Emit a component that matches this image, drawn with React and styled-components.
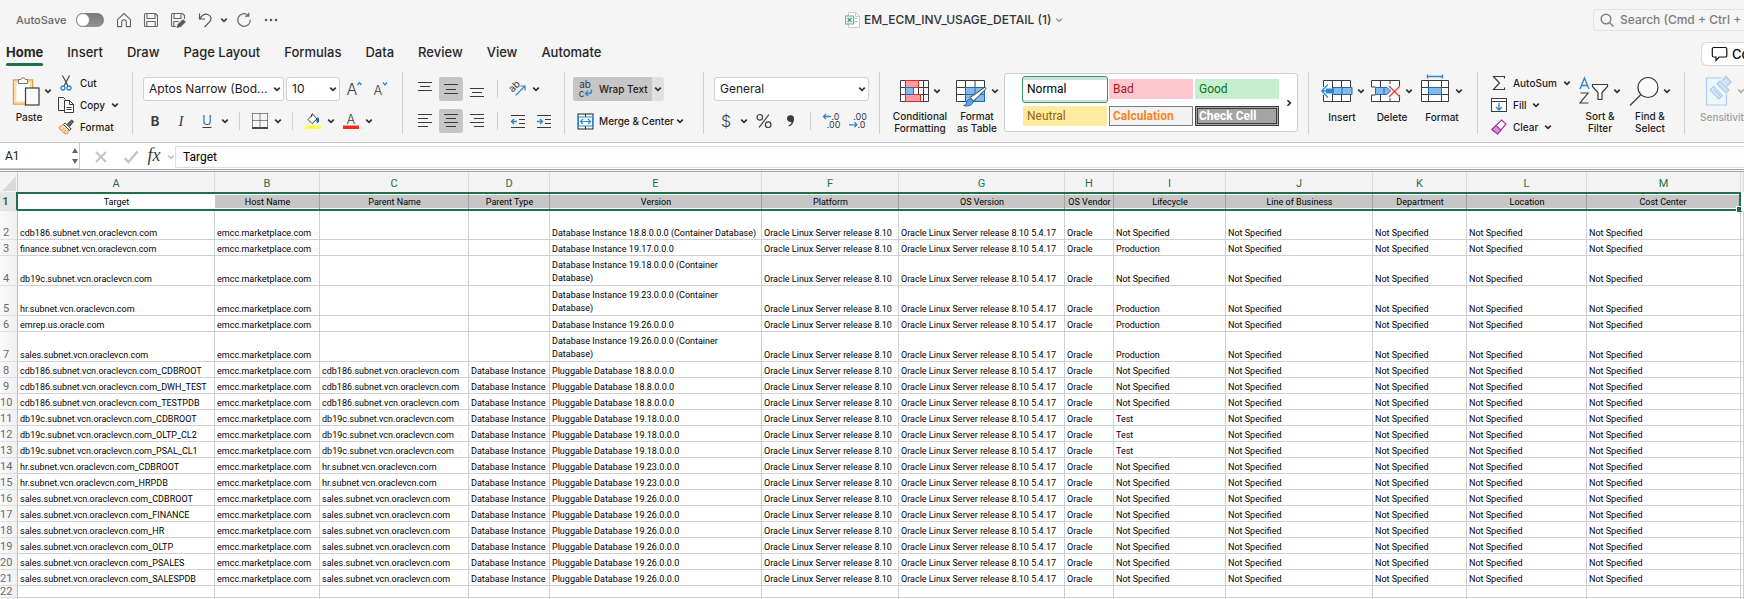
import React from 'react';
import styled, { createGlobalStyle, css } from 'styled-components';

const ui = 'Inter, "Liberation Sans", sans-serif';
const sheetFont = 'Roboto, "Liberation Sans", sans-serif';
const green = '#1e7048';

const GlobalStyle = createGlobalStyle`
  *, *::before, *::after { box-sizing: border-box; }
  body { margin: 0; background: #fff; }
  button, input, select { font: inherit; color: inherit; margin: 0; }
  button { padding: 0; border: 0; background: none; white-space: nowrap; }
  svg { display: block; flex: none; overflow: visible; }
`;

const Window = styled.div`
  height: 100vh;
  display: flex;
  flex-direction: column;
  overflow: hidden;
  background: #f5f5f5;
  color: #262626;
  font: 12px/16px ${ui};
`;

/* ---------- title bar ---------- */
const TitleBar = styled.header`
  display: grid;
  grid-template-columns: 845fr 228px 671fr;
  align-items: center;
  height: 40px;
  flex: none;
`;
const QuickAccess = styled.div`
  display: flex;
  align-items: center;
  padding-left: 16px;
  color: #555;
`;
const SwitchLabel = styled.label`
  display: flex;
  align-items: center;
  gap: 10px;
  margin-right: 6px;
  font-size: 11px;
  font-weight: 500;
  color: #666;
`;
const Switch = styled.input`
  appearance: none;
  width: 28px;
  height: 14px;
  border-radius: 7px;
  background: linear-gradient(#7a7a7a, #929292);
  &::before {
    content: '';
    display: block;
    width: 14px;
    height: 14px;
    border-radius: 50%;
    background: #fff;
    border: 1px solid #8c8c8c;
  }
`;
const QuickButton = styled.button`
  display: grid;
  place-items: center;
  width: ${(p) => (p.$narrow ? 12 : 27)}px;
  height: 24px;
`;
const DocTitle = styled.button`
  display: flex;
  align-items: center;
  gap: 4px;
  font-size: 12px;
  font-weight: 500;
  color: #333;
`;
const Search = styled.label`
  justify-self: end;
  display: flex;
  align-items: center;
  gap: 6px;
  width: 151px;
  height: 22px;
  padding-left: 6px;
  overflow: hidden;
  border: 1px solid #e2e2e2;
  border-right: 0;
  border-radius: 5px 0 0 5px;
  color: #777;
  input {
    flex: none;
    width: 150px;
    padding: 0;
    border: 0;
    background: none;
    font-weight: 500;
  }
  input::placeholder { color: #7c7c7c; opacity: 1; }
`;

/* ---------- tabs ---------- */
const TabBar = styled.nav`
  display: flex;
  justify-content: space-between;
  height: 30px;
  flex: none;
`;
const Tabs = styled.div`
  display: flex;
  gap: 24px;
  padding-left: 6px;
`;
const Tab = styled.button`
  display: flex;
  flex-direction: column;
  justify-content: space-between;
  height: 26px;
  padding-top: 4px;
  font-size: 13px;
  line-height: 16px;
  font-weight: ${(p) => (p.$active ? 700 : 500)};
  &::after {
    content: '';
    width: 100%;
    height: 3px;
    border-radius: 2px;
    background: ${(p) => (p.$active ? green : 'transparent')};
  }
`;
const Comments = styled.button`
  display: flex;
  align-items: center;
  gap: 4px;
  width: 43px;
  height: 24px;
  margin-top: 2px;
  padding-left: 9px;
  overflow: hidden;
  border: 1px solid #d8d8d8;
  border-right: 0;
  border-radius: 6px 0 0 6px;
  background: #fff;
  color: #000;
  font-size: 13px;
  font-weight: 500;
`;

/* ---------- ribbon ---------- */
const Ribbon = styled.div`
  display: flex;
  flex: none;
  height: 73px;
  padding-top: 2px;
  border-bottom: 1px solid #c9c9c9;
`;
const Group = styled.section`
  display: flex;
  flex: none;
  height: 62px;
  width: ${(p) => p.$w}px;
  padding-left: ${(p) => p.$pad}px;
  border-right: 1px solid #d0d0d0;
  &:last-child { flex: 1 1 0; border: 0; overflow: hidden; }
`;
const Rows = styled.div`
  display: flex;
  flex-direction: column;
  gap: 8px;
  padding-top: 5px;
`;
const Row = styled.div`
  display: flex;
  align-items: center;
  gap: 2px;
  height: 24px;
`;
const Split = styled.div`
  display: flex;
`;
const Tool = styled.button`
  display: grid;
  place-items: center;
  width: 24px;
  height: 24px;
  border-radius: 3px;
  background: ${(p) => (p.$on ? '#c6c6c6' : 'none')};
`;
const Arrow = styled.button`
  display: grid;
  place-items: center;
  width: 12px;
  height: 24px;
`;
const Rule = styled.span`
  width: 1px;
  height: 18px;
  margin: 0 6px;
  background: #d0d0d0;
`;
const SelectBox = styled.label`
  position: relative;
  width: ${(p) => p.$w}px;
  height: 24px;
  select {
    appearance: none;
    width: 100%;
    height: 24px;
    padding: 0 12px 0 5px;
    border: 1px solid #cfcfcf;
    border-radius: 3px;
    background: #fff;
    color: #1c1c1c;
    font-size: 12px;
  }
  svg {
    position: absolute;
    right: 3px;
    top: 8px;
    pointer-events: none;
  }
`;
const List = styled.div`
  display: flex;
  flex-direction: column;
  align-items: flex-start;
  width: ${(p) => p.$w}px;
`;
const ListItem = styled.button`
  display: flex;
  align-items: center;
  flex: none;
  gap: 6px;
  height: 22px;
  font-size: 10px;
  font-weight: 500;
  color: #1c1c1c;
`;
const Big = styled.button`
  display: flex;
  flex-direction: column;
  align-items: ${(p) => (p.$start ? 'flex-start' : 'center')};
  width: ${(p) => p.$w}px;
  flex: none;
  color: ${(p) => (p.disabled ? '#a0a0a0' : '#1c1c1c')};
`;
const BigIcon = styled.span`
  display: flex;
  align-items: center;
  gap: 4px;
  height: 38px;
`;
const BigLabel = styled.span`
  min-width: 34px;
  padding-top: 1px;
  text-align: center;
  font-size: 10px;
  line-height: 12px;
  font-weight: 500;
  white-space: pre-line;
`;
const WrapButton = styled.div`
  display: flex;
  height: 24px;
  width: 91px;
  border-radius: 3px;
  overflow: hidden;
  background: #e0e0e0;
  button:first-child { background: #c6c6c6; width: 79px; }
`;
const TextTool = styled.button`
  display: flex;
  align-items: center;
  gap: 5px;
  height: 24px;
  padding-left: 4px;
  font-size: 10px;
  font-weight: 500;
  color: #1c1c1c;
`;
const Gallery = styled.div`
  display: flex;
  align-items: center;
  justify-content: space-between;
  width: 294px;
  height: 59px;
  margin-top: 1px;
  padding: 0 2px 0 17px;
  border: 1px solid #cfcfcf;
  border-radius: 3px;
  background: #fff;
`;
const StyleGrid = styled.div`
  display: grid;
  grid-template-columns: 86px 86px 86px;
  grid-template-rows: 27px 27px;
  align-items: center;
  justify-items: center;
`;
const styles = {
  normal: css`
    width: 86px; height: 27px; color: #000; padding-left: 4px;
    border: 1px solid #3d9468; border-radius: 3px;
    box-shadow: inset 0 3px #cfe3d8, inset 0 -2px #cfe3d8;
  `,
  bad: css`background: #ffc7ce; color: #a3171b;`,
  good: css`background: #c6efce; color: #12701c;`,
  neutral: css`background: #ffeb9f; color: #9c6210;`,
  calculation: css`background: #f2f2f2; color: #fa8422; font-weight: 700; border: 1px solid #7f7f7f; padding-left: 3px;`,
  check: css`background: #a5a5a5; color: #fff; font-weight: 700; border: 3px double #3f3f3f; padding-left: 1px;`,
};
const StyleCell = styled.button`
  width: 84px;
  height: 20px;
  padding-left: 4px;
  text-align: left;
  font: 12px/14px ${sheetFont};
  ${(p) => styles[p.$kind]}
`;

/* ---------- formula bar ---------- */
const FormulaBar = styled.div`
  display: flex;
  align-items: center;
  flex: none;
  height: 29px;
  background: #fff;
  border-bottom: 1px solid #a8a8a8;
  box-shadow: inset 0 -1px #f0f0f0, inset 0 -2px #a8a8a8;
`;
const NameBox = styled.label`
  display: flex;
  align-items: center;
  width: 80px;
  height: 26px;
  align-self: flex-start;
  padding: 0 1px 0 5px;
  border: solid #c9c9c9;
  border-width: 0 1px 1px 0;
  input { width: 66px; padding: 0; border: 0; background: none; font: 12px/16px ${sheetFont}; color: #222; }
`;
const FormulaTools = styled.div`
  display: flex;
  align-items: center;
  width: 95px;
  height: 24px;
`;
const FormulaTool = styled.button`
  display: grid;
  place-items: center;
  width: ${(p) => p.$w}px;
  height: 24px;
`;
const FormulaInput = styled.input`
  flex: 1;
  min-width: 0;
  height: 22px;
  padding: 0 7px;
  border: 1px solid #e0e0e0;
  border-right: 0;
  background: #fdfdfd;
  color: #000;
  font: 12px/16px ${sheetFont};
`;

/* ---------- sheet ---------- */
const Sheet = styled.main`
  flex: 1;
  min-height: 0;
  overflow: hidden;
  background: #fff;
`;
const Grid = styled.table`
  width: 100%;
  table-layout: fixed;
  border-collapse: separate;
  border-spacing: 0;
  font: 9px/12px ${sheetFont};
  color: #000;
`;
const Col = styled.col`
  width: ${(p) => (p.$w ? p.$w + 'px' : 'auto')};
`;
const Corner = styled.td`
  height: 20px;
  padding: 2px 0 0 2px;
  background: #f4f4f4;
  border-right: 1px solid #cfcfcf;
`;
const ColHead = styled.th`
  height: 20px;
  padding: 4px 0 0;
  background: #f3f3f3;
  border-right: 1px solid #dcdcdc;
  color: ${green};
  font-size: 11px;
  font-weight: 400;
  line-height: 14px;
`;
const RowHead = styled.th`
  height: ${(p) => p.$h}px;
  padding: 0 5px 0 0;
  vertical-align: bottom;
  overflow: hidden;
  background: linear-gradient(90deg, #fafafa, #f0f0f0);
  border-right: ${(p) => (p.$on ? `2px solid ${green}` : '1px solid #bdbdbd')};
  border-bottom: 1px solid #e0e0e0;
  color: ${(p) => (p.$on ? green : '#6a6a6a')};
  font-size: 11px;
  font-weight: ${(p) => (p.$on ? 700 : 400)};
  line-height: ${(p) => (p.$h < 14 ? 11 : 13)}px;
  ${(p) => p.$on && 'vertical-align: middle; padding-top: 1px; background: #e6e6e6;'}
`;
const Cell = styled.td`
  height: ${(p) => p.$h}px;
  padding: 0 0 0 2px;
  vertical-align: bottom;
  white-space: pre;
  line-height: ${(p) => (p.$wrapped ? 13 : p.$h < 14 ? 11 : 12)}px;
  border-right: 1px solid #d0d0d0;
  border-bottom: 1px solid #d0d0d0;
`;
const HeadCell = styled.td`
  position: relative;
  height: 19px;
  padding: 0;
  text-align: center;
  white-space: nowrap;
  background: ${(p) => (p.$first ? '#fff' : p.$blank ? '#fff' : '#c6c6c6')};
  border: solid ${green};
  border-width: ${(p) => (p.$blank ? '0' : p.$last ? '2px 2px 2px 0' : '2px 0 2px 0')};
  box-shadow: ${(p) => (p.$blank ? 'none' : `inset ${p.$first || p.$last ? 0 : '-1px'} 0 #a2a2a2, inset 0 1px #fff, inset 0 -1px #fff`)};
`;
const Handle = styled.span`
  position: absolute;
  right: -3px;
  bottom: -3px;
  width: 6px;
  height: 6px;
  background: ${green};
  border: solid #fff;
  border-width: 1px 0 0 1px;
`;

/* ---------- icons ---------- */
const Ink = '#3b3b3b';
const Blue = '#2b88d0';
const Chevron = ({ c = '#333', w = 1.7 }) => (
  <svg width="8" height="8" viewBox="0 0 8 8" fill="none" stroke={c} strokeWidth={w}><path d="M1.2 2.6 4 5.4 6.8 2.6" /></svg>
);
const I = ({ w = 16, h = 16, c = Ink, s = 1, children }) => (
  <svg width={w} height={h} viewBox={`0 0 ${w} ${h}`} fill="none" stroke={c} strokeWidth={s}>{children}</svg>
);
const HomeIcon = () => <I c="#666" s={1.1}><path d="M1.5 7.6 8 1.5l6.5 6.1v7h-4.2V10a2.3 2.3 0 0 0-4.600 0v4.600H1.500z" strokeLinejoin="round" /></I>;
const SaveIcon = () => <I c="#666" s={1.1}><path d="M1.500 2.500a1 1 0 0 1 1-1h10l2 2v10a1 1 0 0 1-1 1h-11a1 1 0 0 1-1-1zM4 1.500V6.500h8V1.500M3.800 14.500v-5h8.400v5" /></I>;
const SaveEditIcon = () => (
  <I c="#666" s={1.1}>
    <path d="M6.500 14.500h-4a1 1 0 0 1-1-1v-11a1 1 0 0 1 1-1h10l2 2V7M4 1.500V6.500h7V1.500M3.800 14.500v-5h5" />
    <path d="M7.500 15.200l.7-3 4.800-4.300 2.200 2.200-4.700 4.400z" fill="#555" />
  </I>
);
const UndoIcon = () => <I c="#555" s={1.2}><path d="M2.500 1.500v5.500h5.500M2.700 6.800C5 3.200 8 1.500 11 2.500c3.400 1.200 4 5 1.600 7.300L7.600 15" /></I>;
const RedoIcon = () => <I c="#666" s={1.2}><path d="M14.300 8a6.300 6.300 0 1 1-2.200-4.800M12.800.8v3.400H9" /></I>;
const DotsIcon = () => <svg width="16" height="16" viewBox="0 0 16 16" fill="#555"><circle cx="3" cy="8" r="1.300" /><circle cx="8" cy="8" r="1.300" /><circle cx="13" cy="8" r="1.300" /></svg>;
const DocIcon = () => (
  <I w={15} h={16} c="#c9c9c9">
    <path d="M3.500.5h7l4 4v11h-11z" fill="#fff" /><path d="M10.500.5v4h4" />
    <path d="M9.500 6.500h3M9.500 9.500h3" stroke="#7fd0a2" />
    <rect x=".5" y="4" width="8" height="8" fill="#eef7f1" stroke="#6cae8b" />
    <path d="M2.500 6l4 4M6.500 6l-4 4" stroke="#4c9a72" strokeWidth="1.200" />
  </I>
);
const SearchIcon = () => <I w={14} h={14} c="#808080" s={1.500}><circle cx="6" cy="6" r="4.800" /><path d="M9.500 9.500l4 4" /></I>;
const CommentIcon = () => <I w={17} h={16} c="#111" s={1.200}><path d="M2.800 1.500h11.500a1.500 1.500 0 0 1 1.500 1.500v6.500a1.500 1.500 0 0 1-1.500 1.500H8.200L5 14.500V11H2.800a1.500 1.500 0 0 1-1.500-1.500V3a1.500 1.500 0 0 1 1.500-1.500z" /></I>;

const PasteIcon = () => (
  <I w={28} h={32}>
    <rect x="1.500" y="5" width="19" height="24" fill="#fff" stroke="#e8973a" strokeWidth="1.400" />
    <rect x="3.300" y="6.800" width="15.500" height="20.500" stroke="#fbdc9a" strokeWidth="2" />
    <path d="M6.500 8.500v-4h2.200a2.400 2.400 0 0 1 4.600 0h2.200v4z" fill="#fafafa" stroke="#777" />
    <rect x="13.500" y="13" width="13.500" height="17" fill="#fafafa" stroke={Ink} strokeWidth="1.200" />
  </I>
);
const CutIcon = () => (
  <I s={1.100}>
    <path d="M4.500.5l5.500 10.500M11.500.5L6 11" />
    <circle cx="5" cy="13" r="2" stroke={Blue} strokeWidth="1.300" /><circle cx="11" cy="13" r="2" stroke={Blue} strokeWidth="1.300" />
  </I>
);
const CopyIcon = () => (
  <I>
    <path d="M6 13.500H.5V.5h5l2 2" />
    <path d="M6.500 3.500h5l4 4v8h-9z" fill="#fff" /><path d="M11.500 3.500v4h4M8.500 10.500h5M8.500 12.500h5" />
  </I>
);
const BrushIcon = () => (
  <I>
    <path d="M1 8.500l5-3.500 5.500 5.500L9 15C6 14.500 2.500 12 1 8.500z" fill="#fce0b0" stroke="#e58a34" />
    <path d="M4 11.500l2-2M6 13.300l2-2.200" stroke="#e58a34" />
    <path d="M5.500 5.500L7.200 4l6 6-1.700 1.300z" fill="#fff" /><path d="M9 5.500L13.500 1l2 1.500-4 5" fill="#666" />
  </I>
);
const Letter = ({ children, size = 14, y = 13, x = 8, ...r }) => (
  <text x={x} y={y} fontSize={size} textAnchor="middle" fill={Ink} stroke="none" fontFamily="Inter, sans-serif" fontWeight="300" {...r}>{children}</text>
);
const GrowIcon = () => <I w={18} h={18}><Letter size={16} x={7} y={15}>A</Letter><path d="M12.500 5l2-2.500 2 2.500" stroke={Blue} strokeWidth="1.300" /></I>;
const ShrinkIcon = () => <I w={18} h={18}><Letter size={13} x={7} y={15}>A</Letter><path d="M12 2.500L14 5l2-2.500" stroke={Blue} strokeWidth="1.300" /></I>;
const BoldIcon = () => <I><Letter fontWeight="700" size={13}>B</Letter></I>;
const ItalicIcon = () => <I><Letter fontStyle="italic" fontFamily="Liberation Serif, serif" size={15}>I</Letter></I>;
const UnderIcon = () => <I><Letter y={12} size={13}>U</Letter><path d="M3.500 14.500h9" /></I>;
const BorderIcon = () => (
  <I><path d="M.5.5v14M15.500.5v14M8 .5v14M.5.5h15M.5 7.500h15" stroke="#222" strokeDasharray="1 1" /><path d="M0 15h16" stroke="#111" strokeWidth="1.500" /></I>
);
const FillIcon = () => (
  <I><path d="M3 6.500L8 1.500l4 4.500-5 4.500z" fill="#fff" /><path d="M6.500 4V1.500l1.500-1" /><path d="M12 6.500c1-3 2-2 1.500 2.500l-1.500.5z" fill="#1f5fa8" stroke="#1f5fa8" /><rect x="0" y="12.500" width="16" height="3.500" fill="#ffff38" stroke="none" /></I>
);
const FontColorIcon = () => <I><Letter y={10.500} size={13}>A</Letter><rect x="0" y="12.500" width="16" height="3.500" fill="#ff2a1c" stroke="none" /></I>;
const Lines = ({ d }) => <I w={16} h={18} s={1.200}><path d={d} /></I>;
const OrientIcon = () => (
  <I><g transform="rotate(-45 6 7)"><Letter size={10} x={6} y={8} fontWeight="400">ab</Letter></g><path d="M5.500 14.500L15 5M10.500 5H15v4.500" stroke={Blue} strokeWidth="1.200" /></I>
);
const IndentIcon = ({ right }) => (
  <I w={16} h={18} s={1.200}><path d="M1 3.500h14M9 7.500h6M9 11.500h6M1 15.500h14" />
    <path d={right ? 'M1 9.500h5.500M4 7l2.500 2.500L4 12' : 'M1.500 9.500H7M4 7L1.500 9.500 4 12'} stroke={Blue} strokeWidth="1.400" /></I>
);
const WrapIcon = () => (
  <I w={17} h={17}><Letter size={10} x={8} y={7} fontWeight="400">ab</Letter><Letter size={10} x={4.500} y={16} fontWeight="400">c</Letter><path d="M14.500 8.500v1.500a2.500 2.500 0 0 1-2.500 2.500H8.500M11 10l-2.500 2.500L11 15" stroke={Blue} strokeWidth="1.400" /></I>
);
const MergeIcon = () => (
  <I w={17} h={17}><rect x="1" y="1" width="15" height="15" fill="#fff" stroke="#222" /><path d="M8.500 1v3M8.500 13v3" stroke="#222" /><rect x="1.500" y="4" width="14" height="9" fill="#fff" stroke={Blue} />
    <path d="M3.500 8.500h10M6 6L3.500 8.500 6 11M11 6l2.500 2.500L11 11" stroke={Blue} strokeWidth="1.200" /></I>
);
const DollarIcon = () => <I w={18} h={20}><Letter size={16} x={9} y={16}>$</Letter></I>;
const PercentIcon = () => <I w={18} h={20} s={1.200}><path d="M14 3.500L4 16.500" /><circle cx="4.800" cy="6.300" r="2.800" /><circle cx="13.200" cy="13.700" r="2.800" /></I>;
const CommaIcon = () => <I w={16} h={20}><path d="M5 7.500a3.300 3.300 0 1 1 7 .5c0 4-2.500 7-5.500 7.500v-1c2-.8 2.800-2 3-3.500C7 11.500 5 10 5 7.500z" fill={Ink} stroke="none" /></I>;
const DecimalIcon = ({ more }) => (
  <I w={18} h={18}>
    <Letter size={9} x={more ? 12 : 13.500} y={8} fontWeight="400">{more ? '.00' : '.0'}</Letter>
    <Letter size={9} x={more ? 13.500 : 11.500} y={16} fontWeight="400">{more ? '.0' : '.00'}</Letter>
    <path d={more ? 'M1 12.800h8M6.500 10.300L9 12.800l-2.500 2.500' : 'M9 4.500H1.500M4 2L1.500 4.500 4 7'} stroke={Blue} strokeWidth="1.300" />
  </I>
);
const CondIcon = () => (
  <I w={29} h={24}><path d="M.5 1.500h28v21H.500zM.5 8.500h28M.5 15.500h28M5.500 1.500v21M18.500 1.500v21M23.500 1.500v21" fill="#fff" />
    <path d="M5.500 1.500h13v7h-13zM5.500 15.500h15v7h-15z" fill="#ff9c9c" stroke="#dc2c22" /><rect x="5.500" y="8.500" width="8" height="7" fill="#86baea" stroke="#1f69b8" /></I>
);
const TableFmtIcon = () => (
  <I w={31} h={24}><path d="M.5 1.500h28v21H.500zM.5 8.500h28M.5 15.500h28M9.500 1.500v21M19 1.500v21" fill="#fff" />
    <path d="M9.500 8.500h19v14h-19z" fill="#86baea" stroke="#1f69b8" /><path d="M9.500 15.500h19M19 8.500v14" stroke="#1f69b8" />
    <path d="M14 18.500L28.500 8.500c1.500-.3 1.700.8 1 1.800L17.500 22z" fill="#fff" /><path d="M7.500 26.500c3 0 2.500-5 6-6.500 3 0 4.500 2.500 3 4.500-2 2.500-6 3-9 2z" fill="#62a3e0" stroke="#1f69b8" /></I>
);
const CellsIcon = ({ kind }) => (
  <I w={kind === 'insert' ? 33 : 30} h={kind === 'format' ? 38 : 24}>
    {kind === 'insert' && (<>
      <path d="M3.500 8v-6.500h27v7M3.500 16v6.500h27v-7M12.500 1.500v21M21.500 1.500v21" fill="#fff" />
      <path d="M13 8.500h19v7H13z" fill="#86baea" stroke="#1f69b8" /><path d="M13.500 9.500H6v5h7.500" fill="#86baea" stroke="none" />
      <path d="M22 8.500v7" stroke="#1f69b8" /><path d="M14 12H2M8 5.500L1.800 12 8 18.500M6 10.500h8M6 13.500h8" stroke={Blue} strokeWidth="1.300" />
    </>)}
    {kind === 'delete' && (<>
      <path d="M.5 8v-6.500h28V8M.5 16v6.500h28V16M9.500 1.500V8M19 1.500V5M9.500 16v6.500M19 19v3.500M.5 8h4M.5 16h4" fill="#fff" />
      <path d="M4.500 8.500h11.500l3.500 3.500-3.500 3.500H4.500zM13 8.500v7" fill="#86baea" stroke="#1f69b8" /><path d="M18 7l11 11M29 7L18 18" stroke="#ee3d34" strokeWidth="1.300" />
    </>)}
    {kind === 'format' && (<>
      <path d="M.5 8.500h27v21H.5zM.5 15.500h27M.5 22.500h27M7.500 8.500v21M20.500 8.500v21" fill="#fff" />
      <rect x="7.500" y="15.500" width="13" height="7" fill="#86baea" stroke="#1f69b8" /><path d="M6.500 4.500h15M6.500 2.500v4M21.500 2.500v4" stroke={Blue} strokeWidth="1.300" />
    </>)}
  </I>
);
const SumIcon = () => <I s={1.200}><path d="M13.500 3.500v-2h-11L8.500 8l-6 6.500h11v-2" /></I>;
const FillDownIcon = () => <I><rect x=".5" y="1.500" width="15" height="13" fill="#fff" /><path d="M.5 4.500h15" /><path d="M8 6v7M5 10l3 3 3-3" stroke={Blue} strokeWidth="1.400" /></I>;
const EraserIcon = () => <I><path d="M10.500 1l4.500 4-8.500 10L1 10.500z" fill="#fff" stroke="#a43aa8" strokeWidth="1.200" /><path d="M5 6.500L10 11l-3.500 4L1 10.500z" fill="#d993dc" stroke="#a43aa8" strokeWidth="1.200" /></I>;
const SortIcon = () => (
  <I w={30} h={30} s={1.200}><path d="M1 13L5.500 2 10 13M2.500 9.500h6" stroke={Blue} strokeWidth="1.400" /><path d="M1.500 17h7.500l-8 10h8.500" /><path d="M13.500 8.500h15v2l-5.500 6v7h-4v-7l-5.500-6z" fill="#fff" /></I>
);
const FindIcon = () => <I w={30} h={30} s={1.200}><circle cx="19" cy="11.500" r="10" fill="#fafafa" /><path d="M12 18.500L1 29.500" /></I>;
const SensIcon = () => (
  <I w={28} h={32} c="#a9cdea" s={1.200}><path d="M17 3H1.500v27h20V19" fill="#f0f7fc" /><path d="M5 15l3.500-3.500 9 9L14 24zM8.500 14.500l6.500 6.500" fill="#dcecf8" />
    <path d="M12 9l3-3 9 9-3 3zM17 6l4-4.500 5 5.500-4 4" fill="#cfe4f4" /></I>
);
const Stepper = () => <svg width="8" height="20" viewBox="0 0 8 20" fill="#666"><path d="M1 7L4 2l3 5zM1 13L4 18l3-5z" /></svg>;

/* ---------- data ---------- */
const columns = [
  ['A', 197, 'Target'], ['B', 105, 'Host Name'], ['C', 149, 'Parent Name'], ['D', 81, 'Parent Type'], ['E', 212, 'Version'],
  ['F', 137, 'Platform'], ['G', 166, 'OS Version'], ['H', 49, 'OS Vendor'], ['I', 112, 'Lifecycle'], ['J', 147, 'Line of Business'],
  ['K', 94, 'Department'], ['L', 120, 'Location'], ['M', 154, 'Cost Center'], ['', 0, ''],
];
const dom = '.subnet.vcn.oraclevcn.com';
const db = (v) => `Database Instance ${v}`;
const container = (v) => `Database Instance ${v} (Container\nDatabase)`;
const NS = 'Not Specified';
const records = [
  [29, 'cdb186' + dom, '', db('18.8.0.0.0 (Container Database)'), NS],
  [16, 'finance' + dom, '', db('19.17.0.0.0'), 'Production'],
  [30, 'db19c' + dom, '', container('19.18.0.0.0'), NS],
  [30, 'hr' + dom, '', container('19.23.0.0.0'), 'Production'],
  [16, 'emrep.us.oracle.com', '', db('19.26.0.0.0'), 'Production'],
  [30, 'sales' + dom, '', container('19.26.0.0.0'), 'Production'],
  ...[
    ['cdb186', 'CDBROOT', '18.8', NS], ['cdb186', 'DWH_TEST', '18.8', NS], ['cdb186', 'TESTPDB', '18.8', NS],
    ['db19c', 'CDBROOT', '19.18', 'Test'], ['db19c', 'OLTP_CL2', '19.18', 'Test'], ['db19c', 'PSAL_CL1', '19.18', 'Test'],
    ['hr', 'CDBROOT', '19.23', NS], ['hr', 'HRPDB', '19.23', NS],
    ['sales', 'CDBROOT', '19.26', NS], ['sales', 'FINANCE', '19.26', NS], ['sales', 'HR', '19.26', NS],
    ['sales', 'OLTP', '19.26', NS], ['sales', 'PSALES', '19.26', NS], ['sales', 'SALESPDB', '19.26', NS],
  ].map(([host, pdb, v, life]) => [16, `${host}${dom}_${pdb}`, host + dom, `Pluggable Database ${v}.0.0.0`, life]),
];
const rows = [
  ...records.map(([h, target, parent, version, life]) => [h, [
    target, 'emcc.marketplace.com', parent, parent && 'Database Instance', version,
    'Oracle Linux Server release 8.10', 'Oracle Linux Server release 8.10 5.4.17', 'Oracle', life, NS, NS, NS, NS, '',
  ]]),
  [12, Array(14).fill('')],
  [12, Array(14).fill('')],
];

const Pick = ({ label, w, value }) => (
  <SelectBox $w={w}><select aria-label={label}><option>{value}</option></select><Chevron /></SelectBox>
);
const Menu = ({ label }) => <Arrow aria-label={label}><Chevron /></Arrow>;
const BigTool = ({ icon, label, w, start, disabled }) => (
  <Big $w={w} $start={start} disabled={disabled}>
    <BigIcon>{icon}<Chevron c={disabled ? '#aaa' : '#333'} /></BigIcon>
    <BigLabel>{label}</BigLabel>
  </Big>
);

export default function App() {
  return (
    <Window>
      <GlobalStyle />
      <TitleBar>
        <QuickAccess>
          <SwitchLabel>AutoSave<Switch type="checkbox" role="switch" /></SwitchLabel>
          <QuickButton aria-label="Home"><HomeIcon /></QuickButton>
          <QuickButton aria-label="Save"><SaveIcon /></QuickButton>
          <QuickButton aria-label="Save as"><SaveEditIcon /></QuickButton>
          <QuickButton aria-label="Undo"><UndoIcon /></QuickButton>
          <QuickButton $narrow aria-label="Undo history"><Chevron c="#444" /></QuickButton>
          <QuickButton aria-label="Redo"><RedoIcon /></QuickButton>
          <QuickButton aria-label="More"><DotsIcon /></QuickButton>
        </QuickAccess>
        <DocTitle><DocIcon />EM_ECM_INV_USAGE_DETAIL (1)<Chevron c="#888" w={1.3} /></DocTitle>
        <Search><SearchIcon /><input type="search" aria-label="Search" placeholder="Search (Cmd + Ctrl + U)" /></Search>
      </TitleBar>

      <TabBar>
        <Tabs>
          {['Home', 'Insert', 'Draw', 'Page Layout', 'Formulas', 'Data', 'Review', 'View', 'Automate'].map((t, i) => (
            <Tab key={t} $active={i === 0}>{t}</Tab>
          ))}
        </Tabs>
        <Comments><CommentIcon />Comments</Comments>
      </TabBar>

      <Ribbon>
        <Group $w={133} $pad={12}>
          <BigTool icon={<PasteIcon />} label="Paste" w={46} start />
          <List $w={70}>
            <ListItem><CutIcon />Cut</ListItem>
            <ListItem><CopyIcon />Copy<Chevron /></ListItem>
            <ListItem><BrushIcon />Format</ListItem>
          </List>
        </Group>

        <Group $w={270} $pad={10}>
          <Rows>
            <Row>
              <Pick label="Font" w={141} value="Aptos Narrow (Bod..." />
              <Pick label="Font size" w={54} value="10" />
              <Tool aria-label="Increase font size"><GrowIcon /></Tool>
              <Tool aria-label="Decrease font size"><ShrinkIcon /></Tool>
            </Row>
            <Row>
              <Tool aria-label="Bold"><BoldIcon /></Tool>
              <Tool aria-label="Italic"><ItalicIcon /></Tool>
              <Split><Tool aria-label="Underline"><UnderIcon /></Tool><Menu label="Underline options" /></Split>
              <Rule />
              <Split><Tool aria-label="Borders"><BorderIcon /></Tool><Menu label="Border options" /></Split>
              <Rule />
              <Split><Tool aria-label="Fill color"><FillIcon /></Tool><Menu label="Fill options" /></Split>
              <Split><Tool aria-label="Font color"><FontColorIcon /></Tool><Menu label="Font color options" /></Split>
            </Row>
          </Rows>
        </Group>

        <Group $w={162} $pad={10}>
          <Rows>
            <Row>
              <Tool aria-label="Top align"><Lines d="M1 2.5h14M3 6.500h10M1 10.500h14" /></Tool>
              <Tool $on aria-label="Middle align"><Lines d="M1 4.500h14M3 9.500h10M1 13.500h14" /></Tool>
              <Tool aria-label="Bottom align"><Lines d="M1 8.500h14M3 12.500h10M1 16.500h14" /></Tool>
              <Rule />
              <Split><Tool aria-label="Orientation"><OrientIcon /></Tool><Menu label="Orientation options" /></Split>
            </Row>
            <Row>
              <Tool aria-label="Align left"><Lines d="M1 2.500h14M1 6.500h10M1 10.500h14M1 14.500h10" /></Tool>
              <Tool $on aria-label="Center"><Lines d="M1 2.500h14M3 6.500h10M1 10.500h14M3 14.500h10" /></Tool>
              <Tool aria-label="Align right"><Lines d="M1 2.500h14M5 6.500h10M1 10.500h14M5 14.500h10" /></Tool>
              <Rule />
              <Tool aria-label="Decrease indent"><IndentIcon /></Tool>
              <Tool aria-label="Increase indent"><IndentIcon right /></Tool>
            </Row>
          </Rows>
        </Group>

        <Group $w={139} $pad={8}>
          <Rows>
            <Row><WrapButton><TextTool><WrapIcon />Wrap Text</TextTool><Menu label="Wrap options" /></WrapButton></Row>
            <Row><Split><TextTool><MergeIcon />Merge &amp; Center</TextTool><Menu label="Merge options" /></Split></Row>
          </Rows>
        </Group>

        <Group $w={176} $pad={10}>
          <Rows>
            <Row><Pick label="Number format" w={155} value="General" /></Row>
            <Row>
              <Split><Tool aria-label="Currency"><DollarIcon /></Tool><Menu label="Currency options" /></Split>
              <Tool aria-label="Percent"><PercentIcon /></Tool>
              <Tool aria-label="Comma"><CommaIcon /></Tool>
              <Rule />
              <Tool aria-label="Increase decimal"><DecimalIcon /></Tool>
              <Tool aria-label="Decrease decimal"><DecimalIcon more /></Tool>
            </Row>
          </Rows>
        </Group>

        <Group $w={429} $pad={10}>
          <BigTool icon={<CondIcon />} label={'Conditional\nFormatting'} w={60} />
          <BigTool icon={<TableFmtIcon />} label={'Format\nas Table'} w={54} />
          <Gallery>
            <StyleGrid>
              <StyleCell $kind="normal">Normal</StyleCell>
              <StyleCell $kind="bad">Bad</StyleCell>
              <StyleCell $kind="good">Good</StyleCell>
              <StyleCell $kind="neutral">Neutral</StyleCell>
              <StyleCell $kind="calculation">Calculation</StyleCell>
              <StyleCell $kind="check">Check Cell</StyleCell>
            </StyleGrid>
            <Arrow aria-label="More styles"><I w={8} h={8} c="#222" s={1.6}><path d="M2.500 1.200L5.300 4 2.500 6.800" /></I></Arrow>
          </Gallery>
        </Group>

        <Group $w={169} $pad={8}>
          <BigTool icon={<CellsIcon kind="insert" />} label="Insert" w={50} />
          <BigTool icon={<CellsIcon kind="delete" />} label="Delete" w={50} />
          <BigTool icon={<CellsIcon kind="format" />} label="Format" w={50} />
        </Group>

        <Group $w={207} $pad={13}>
          <List $w={84}>
            <ListItem><SumIcon />AutoSum<Chevron /></ListItem>
            <ListItem><FillDownIcon />Fill<Chevron /></ListItem>
            <ListItem><EraserIcon />Clear<Chevron /></ListItem>
          </List>
          <BigTool icon={<SortIcon />} label={'Sort &\nFilter'} w={50} />
          <BigTool icon={<FindIcon />} label={'Find &\nSelect'} w={50} />
        </Group>

        <Group $pad={11}>
          <BigTool icon={<SensIcon />} label="Sensitivity" w={58} disabled />
        </Group>
      </Ribbon>

      <FormulaBar>
        <NameBox><input aria-label="Name box" defaultValue="A1" /><Stepper /></NameBox>
        <FormulaTools>
          <FormulaTool $w={42} aria-label="Cancel"><I w={14} h={14} c="#c4c4c4" s={2}><path d="M2 2l10 10M12 2L2 12" /></I></FormulaTool>
          <FormulaTool $w={18} aria-label="Enter"><I w={16} h={14} c="#c4c4c4" s={2.400}><path d="M1.500 8l4 4 9-10.500" /></I></FormulaTool>
          <FormulaTool $w={26} aria-label="Insert function"><I w={18} h={18}><Letter x={10} size={18} fontFamily="Liberation Serif, serif" fontStyle="italic">fx</Letter></I></FormulaTool>
          <FormulaTool $w={9} aria-label="Function list"><Chevron c="#c4c4c4" /></FormulaTool>
        </FormulaTools>
        <FormulaInput aria-label="Formula" defaultValue="Target" />
      </FormulaBar>

      <Sheet>
        <Grid>
          <colgroup>
            <Col $w={18} />
            {columns.map(([id, w]) => <Col key={id} $w={w} />)}
          </colgroup>
          <thead>
            <tr>
              <Corner><svg width="14" height="15" viewBox="0 0 14 15"><path d="M14 0v15H0z" fill="#dadada" /></svg></Corner>
              {columns.map(([id]) => <ColHead key={id} scope="col">{id}</ColHead>)}
            </tr>
          </thead>
          <tbody>
            <tr>
              <RowHead scope="row" $h={19} $on>1</RowHead>
              {columns.map(([id, , name], i) => (
                <HeadCell key={id} $first={i === 0} $last={i === 12} $blank={i === 13}>{name}{i === 12 && <Handle />}</HeadCell>
              ))}
            </tr>
            {rows.map(([h, cells], r) => (
              <tr key={r}>
                <RowHead scope="row" $h={h}>{r + 2}</RowHead>
                {cells.map((text, i) => <Cell key={i} $h={h} $wrapped={text.includes('\n')}>{text}</Cell>)}
              </tr>
            ))}
          </tbody>
        </Grid>
      </Sheet>
    </Window>
  );
}
